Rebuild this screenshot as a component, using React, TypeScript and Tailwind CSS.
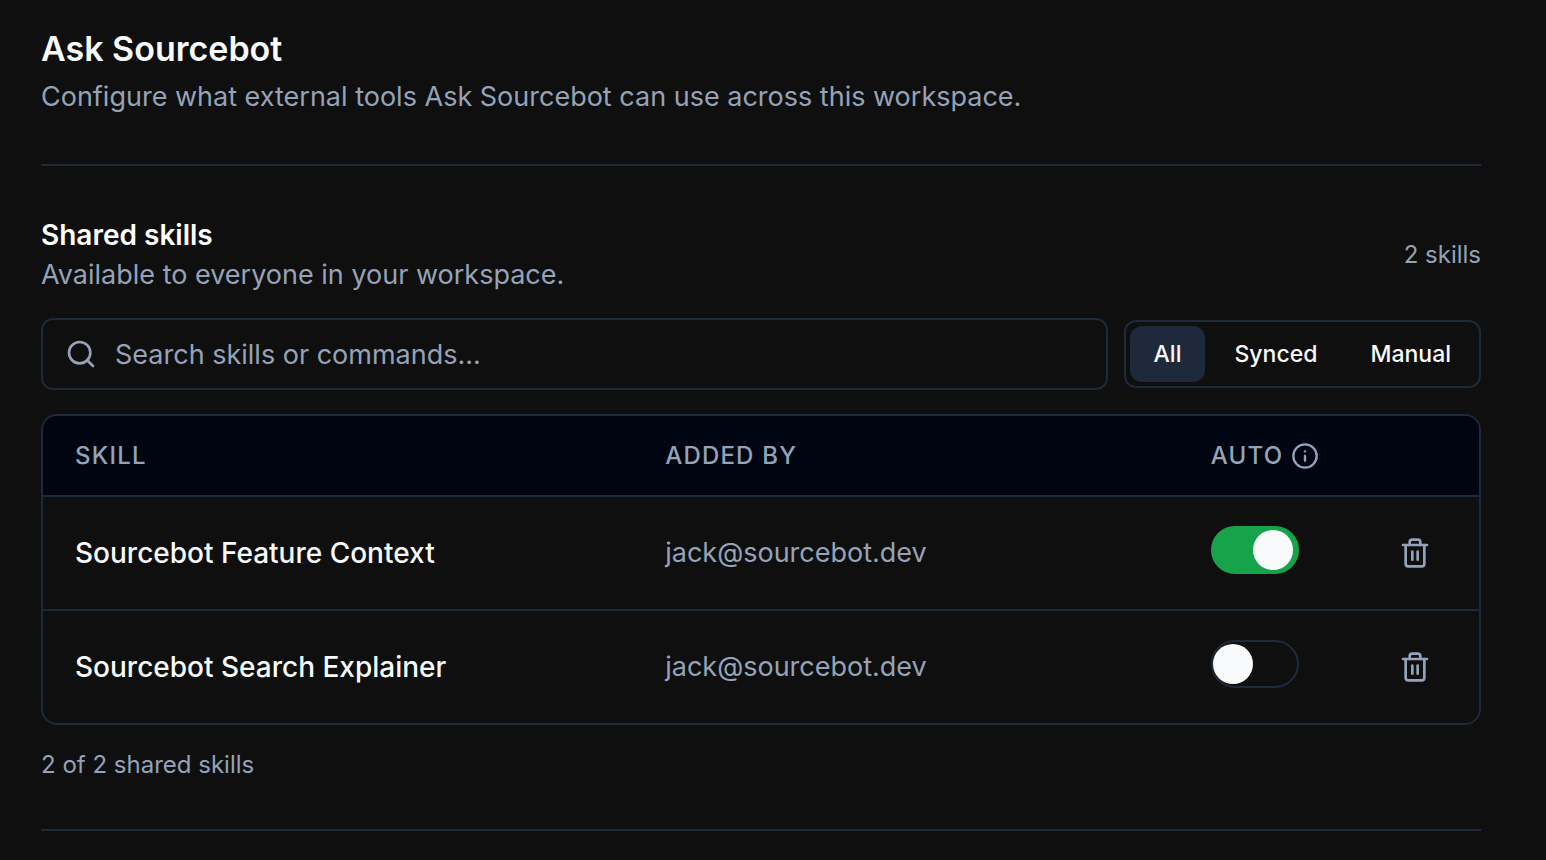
import { useState } from "react";
import { Info, Search, Trash2 } from "lucide-react";

type Skill = { name: string; addedBy: string; auto: boolean; synced: boolean };

const initialSkills: Skill[] = [
  { name: "Sourcebot Feature Context", addedBy: "jack@sourcebot.dev", auto: true, synced: true },
  { name: "Sourcebot Search Explainer", addedBy: "jack@sourcebot.dev", auto: false, synced: false },
];

const filters = ["All", "Synced", "Manual"] as const;
type Filter = (typeof filters)[number];

function Toggle({ label, checked, onChange }: { label: string; checked: boolean; onChange: () => void }) {
  return (
    <button
      type="button"
      role="switch"
      aria-checked={checked}
      aria-label={label}
      onClick={onChange}
      className={
        checked
          ? "flex h-12 w-22 items-center justify-end rounded-full border-2 border-[#16a34a] bg-[#16a34a] px-1"
          : "flex h-12 w-22 items-center justify-start rounded-full border-2 border-[#1e293b]"
      }
    >
      <span className="size-10 rounded-full bg-slate-50" />
    </button>
  );
}

export default function App() {
  const [skills, setSkills] = useState(initialSkills);
  const [filter, setFilter] = useState<Filter>("All");
  const [query, setQuery] = useState("");

  const visible = skills.filter(
    (s) =>
      s.name.toLowerCase().includes(query.toLowerCase()) &&
      (filter === "All" || (filter === "Synced") === s.synced),
  );

  const toggle = (name: string) =>
    setSkills(skills.map((s) => (s.name === name ? { ...s, auto: !s.auto } : s)));
  const remove = (name: string) => setSkills(skills.filter((s) => s.name !== name));

  return (
    <main className="min-h-screen bg-[#0f0f0f] pt-[25px] pr-[65px] pl-[41px] font-['Inter',sans-serif] text-[#94a3b8]">
      <header className="border-b-2 border-[#1e293b] pb-[43px]">
        <h1 className="text-[34px] leading-12 font-semibold text-slate-50">Ask Sourcebot</h1>
        <p className="text-[27px] leading-12">
          Configure what external tools Ask Sourcebot can use across this workspace.
        </p>
      </header>

      <section className="border-b-2 border-[#1e293b] py-12">
        <div className="flex items-center justify-between pt-px">
          <div>
            <h2 className="text-[28px] leading-10 font-semibold text-white">Shared skills</h2>
            <p className="text-[27px] leading-10">Available to everyone in your workspace.</p>
          </div>
          <span className="text-2xl">2 skills</span>
        </div>

        <div className="mt-[23px] flex items-center gap-4">
          <label className="flex h-18 flex-1 items-center gap-[18px] rounded-xl border-2 border-[#1e293b] px-[22px]">
            <Search className="size-8" strokeWidth={2} aria-hidden="true" />
            <input
              type="text"
              aria-label="Search skills"
              value={query}
              onChange={(e) => setQuery(e.target.value)}
              placeholder="Search skills or commands..."
              className="min-w-0 flex-1 bg-transparent pt-0.5 text-[27px] text-white outline-none placeholder:text-[#94a3b8]"
            />
          </label>
          <div className="flex gap-[5px] rounded-xl border-2 border-[#1e293b] p-1">
            {filters.map((f) => (
              <button
                key={f}
                type="button"
                aria-pressed={filter === f}
                onClick={() => setFilter(f)}
                className={
                  filter === f
                    ? "h-14 rounded-xl bg-[#1e293b] px-6 text-[23px] font-medium text-slate-50"
                    : "h-14 rounded-xl px-6 text-[23px] font-medium text-slate-50"
                }
              >
                {f}
              </button>
            ))}
          </div>
        </div>

        <div className="mt-6 overflow-hidden rounded-2xl border-2 border-[#1e293b]">
          <table className="w-full table-fixed border-separate border-spacing-0 text-left">
            <thead className="bg-[#000611] text-2xl tracking-wider">
              <tr className="h-[79px]">
                <th className="w-[41.1%] pl-8 font-medium">SKILL</th>
                <th className="w-[38%] pl-8 font-medium">ADDED BY</th>
                <th className="pl-8 font-medium">
                  <span className="flex items-center gap-2">
                    AUTO <Info className="size-7" aria-hidden="true" />
                  </span>
                </th>
                <th className="w-32" aria-label="Actions" />
              </tr>
            </thead>
            <tbody className="text-[27px]">
              {visible.map((s) => (
                <tr key={s.name} className="h-[114px]">
                  <td className="border-t-2 border-[#1e293b] pl-8 text-[28px] font-medium text-slate-50">{s.name}</td>
                  <td className="border-t-2 border-[#1e293b] pl-8">{s.addedBy}</td>
                  <td className="border-t-2 border-[#1e293b] pb-1.5 pl-8">
                    <Toggle label={`Auto for ${s.name}`} checked={s.auto} onChange={() => toggle(s.name)} />
                  </td>
                  <td className="border-t-2 border-[#1e293b] pl-12">
                    <button type="button" aria-label={`Delete ${s.name}`} onClick={() => remove(s.name)} className="block">
                      <Trash2 className="size-8" aria-hidden="true" />
                    </button>
                  </td>
                </tr>
              ))}
            </tbody>
          </table>
        </div>

        <p className="mt-6 text-2xl">
          {visible.length} of {skills.length} shared skills
        </p>
      </section>
    </main>
  );
}
